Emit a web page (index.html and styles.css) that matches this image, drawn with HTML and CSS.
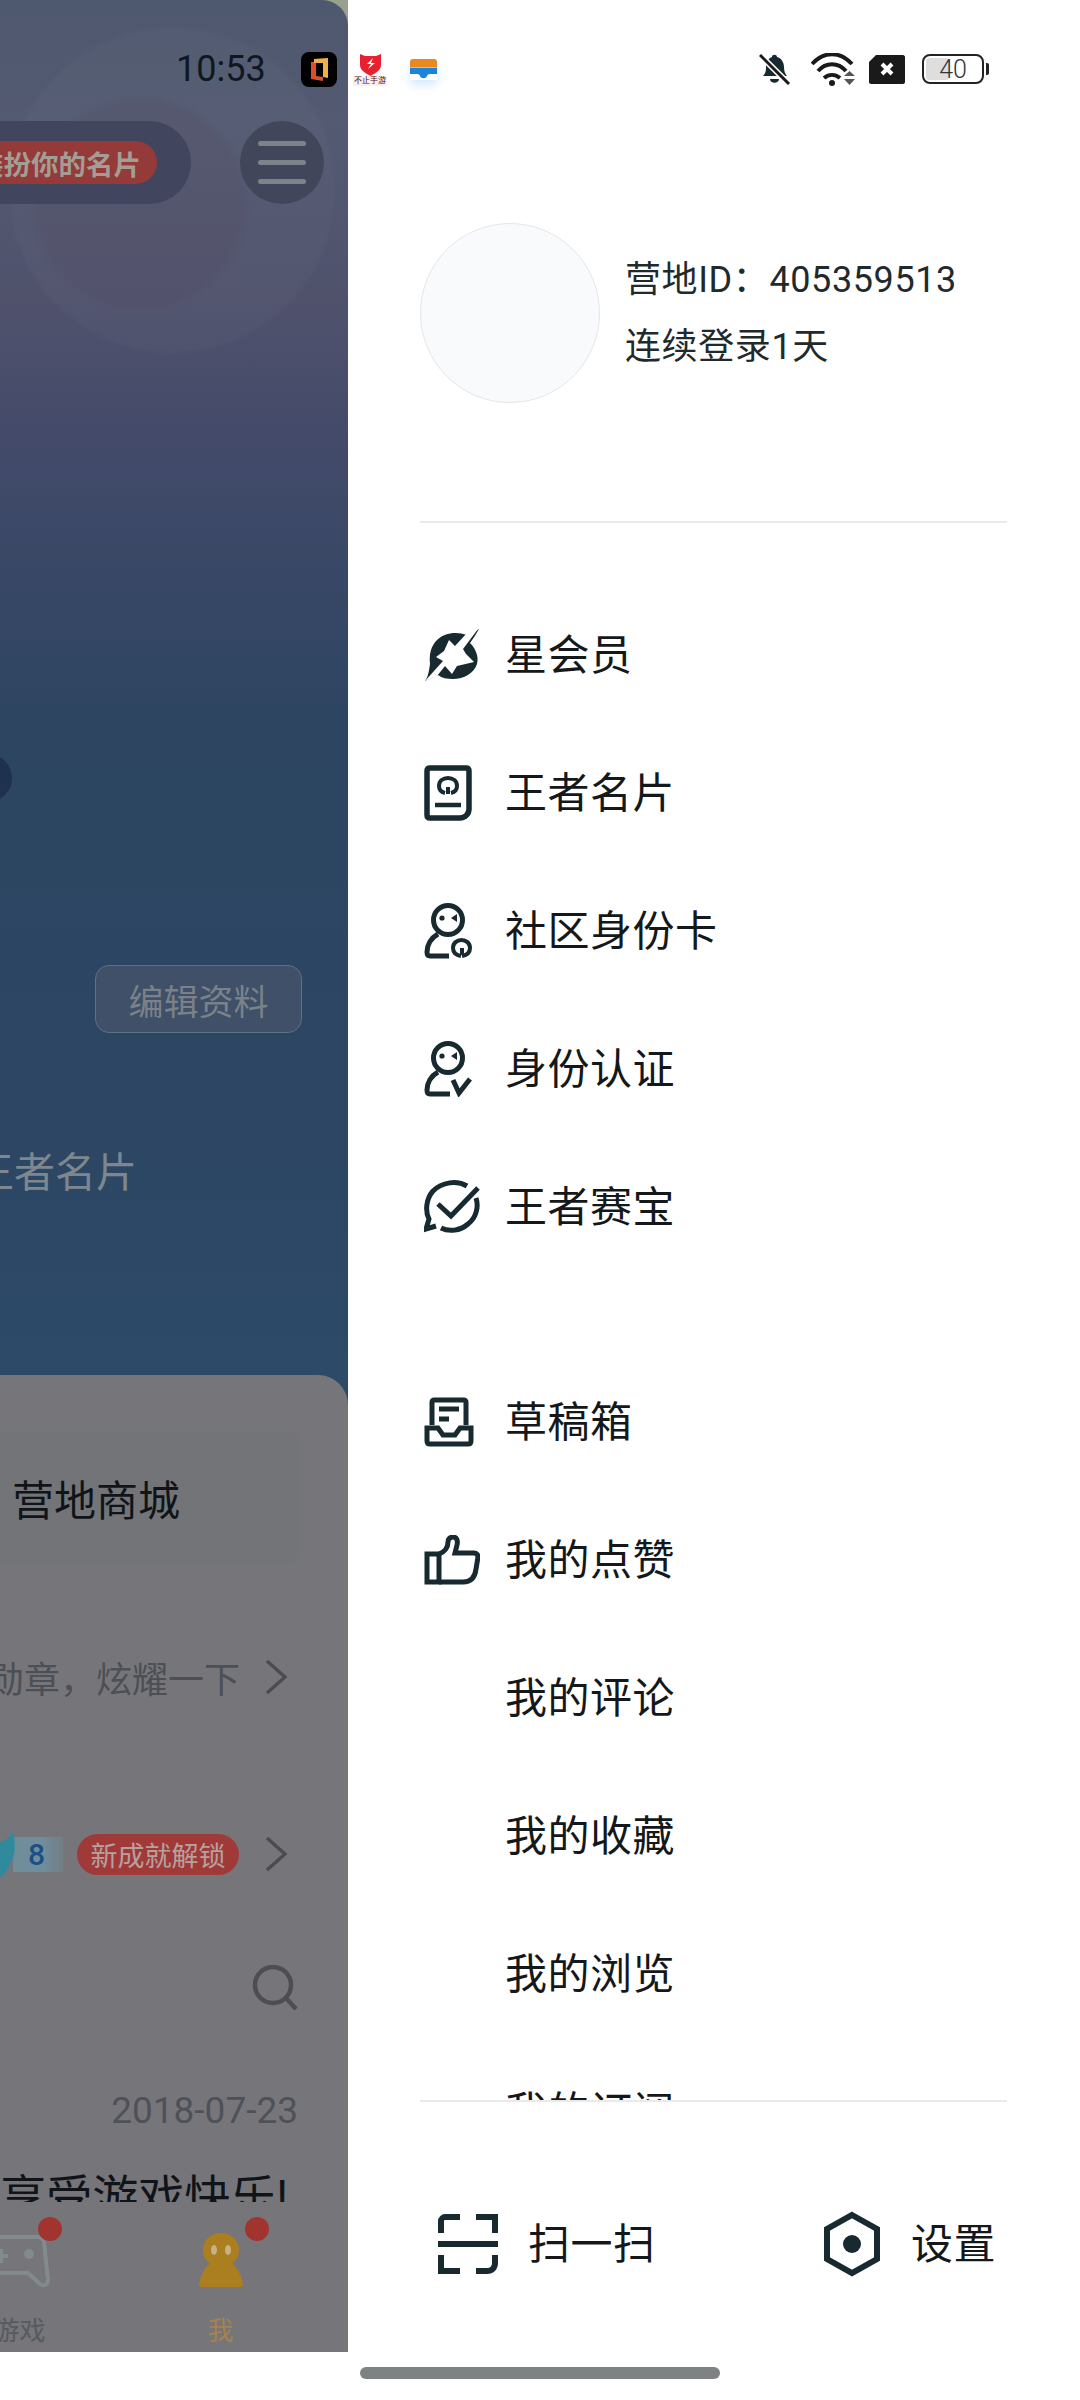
FILE: index.html
```html
<!DOCTYPE html>
<html lang="zh-CN">
<head>
<meta charset="utf-8">
<title>营地</title>
<link rel="stylesheet" href="styles.css">
</head>
<body>
<div class="page">
  <section class="left">
    <div class="hero">
      <div class="topbar">
        <div class="pill"><span class="pill-badge">装扮你的名片</span></div>
        <div class="burger"><i></i><i></i><i></i></div>
      </div>
      <div class="dark-dot"></div>
      <div class="edit-btn">编辑资料</div>
      <div class="hero-title">王者名片</div>
    </div>
    <div class="sheet">
      <div class="feed">
        <div class="shop-card">营地商城</div>
        <div class="info-row">
          <span class="info-text">佩戴勋章，炫耀一下</span>
          <svg class="chev" viewBox="0 0 22 36"><path d="M2 2l18 16L2 34"/></svg>
        </div>
        <div class="info-row info-row-2">
          <svg class="flame" viewBox="0 0 16 47"><path d="M14 0c2 10 3 20-1 29-3 8-7 14-13 18V12C6 10 11 6 14 0z" fill="#2f8a9e"/></svg>
          <span class="ribbon">8</span>
          <span class="ach">新成就解锁</span>
          <svg class="chev" viewBox="0 0 22 36"><path d="M2 2l18 16L2 34"/></svg>
        </div>
        <div class="search-row">
          <svg class="search" viewBox="0 0 46 46"><circle cx="21" cy="20" r="18"/><path d="M34 33l10 11"/></svg>
        </div>
        <div class="date">2018-07-23</div>
        <div class="post-title">享受游戏快乐!</div>
      </div>
      <nav class="tabbar">
        <div class="tab">
          <svg class="tab-icon game" viewBox="0 0 60 56"><path d="M0 5h48c3 0 5 2 6 5l4 38c0 5-5 7-9 3L38 41H0" /><circle cx="39" cy="22" r="5" class="game-dot"/><path d="M4 24h14M11 17v14"/></svg>
          <span class="tab-label">游戏</span>
          <i class="tab-dot dot-a"></i>
        </div>
        <div class="tab tab-on">
          <svg class="tab-icon" viewBox="0 0 44 56"><path d="M22 1c11 0 18 8 18 17 0 6-3 11-7 14 5 3 9 10 11 20 0 2-1 3-3 3H3c-2 0-3-1-3-3 2-10 6-17 11-20-4-3-7-8-7-14C4 9 11 1 22 1z" fill="#ab7f1f"/><ellipse cx="15" cy="18" rx="3" ry="5" fill="#c9b184"/><ellipse cx="29" cy="18" rx="3" ry="5" fill="#c9b184"/></svg>
          <span class="tab-label">我</span>
          <i class="tab-dot dot-b"></i>
        </div>
      </nav>
    </div>
  </section>

  <aside class="drawer">
    <div class="profile">
      <div class="avatar"></div>
      <div class="profile-text">
        <div class="profile-line">营地ID：405359513</div>
        <div class="profile-line">连续登录1天</div>
      </div>
    </div>
    <div class="rule"></div>
    <div class="menu">
      <div class="group">
        <div class="item">
          <span class="ico"><svg width="56" height="52" viewBox="0 0 56 52"><path class="solid" d="M55 0c-3 5-6 10-9 14 6 6 9 14 7 21-3 9-13 15-24 15-6 0-11-1-15-4-4 2-9 4-13 6 3-4 4-10 5-17C5 25 7 17 13 11 20 4 32 2 43 6c4-2 8-4 12-6z"/><path fill="#fff" d="M25 11l6 6L43 4l11-4-15 20 3 5 8 8-17 4-5 8-7-8-8 10-12 5 18-20-7-4 8-6z"/></svg></span>
          <span class="label">星会员</span>
        </div>
        <div class="item">
          <span class="ico"><svg width="48" height="56" viewBox="0 0 48 56"><path class="line" d="M6 3h36c2 0 3 1 3 3v38c0 5-4 9-9 9H6c-2 0-3-1-3-3V6c0-2 1-3 3-3z" stroke-width="5.500"/><path class="line" d="M21 28c-4-1-6-4-6-7 0-5 4-8 9-8s9 3 9 8c0 3-2 6-6 7" stroke-width="4"/><path class="line" d="M24 22v7" stroke-width="4"/><path class="line" d="M11 40h26" stroke-width="4.500"/></svg></span>
          <span class="label">王者名片</span>
        </div>
        <div class="item">
          <span class="ico"><svg width="48" height="56" viewBox="0 0 48 56"><circle class="line" cx="24" cy="17" r="14.500" stroke-width="5"/><circle class="solid" cx="18" cy="15" r="2.600"/><path class="solid" d="M33 11v8l-6-4z"/><path class="line" d="M14 31C7 35 3 42 3 49c0 3 1 4 3 4h19" stroke-width="5"/><path class="line" d="M37 53c-5-1-8-4-8-8 0-5 4-8 8.500-8S46 40 46 45c0 4-3 7-8 8" stroke-width="4"/><path class="line" d="M38 45v7" stroke-width="4"/></svg></span>
          <span class="label">社区身份卡</span>
        </div>
        <div class="item">
          <span class="ico"><svg width="48" height="56" viewBox="0 0 48 56"><circle class="line" cx="24" cy="17" r="14.500" stroke-width="5"/><circle class="solid" cx="18" cy="15" r="2.600"/><path class="solid" d="M33 11v8l-6-4z"/><path class="line" d="M14 31C7 35 3 42 3 49c0 3 1 4 3 4h20" stroke-width="5"/><path class="line" d="M29 39l6 13 11-14" stroke-width="5"/></svg></span>
          <span class="label">身份认证</span>
        </div>
        <div class="item">
          <span class="ico"><svg width="56" height="54" viewBox="0 0 56 54"><path class="line" d="M43 6C33 0 18 2 9 11 2 19 1 31 5 39l-3 10 10-3" stroke-width="5"/><path class="line" d="M52 18c3 9 0 20-8 26-8 7-19 8-27 4" stroke-width="5"/><path class="line" d="M14 24l13 12L54 8" stroke-width="5"/></svg></span>
          <span class="label">王者赛宝</span>
        </div>
      </div>
      <div class="group group-2">
        <div class="item">
          <span class="ico"><svg width="50" height="50" viewBox="0 0 50 50"><path class="line" d="M8 28V5c0-1 1-2 2-2h30c1 0 2 1 2 2v23" stroke-width="5"/><path class="line" d="M15 12h20M15 22h10" stroke-width="5"/><path class="line" d="M3 31h11l5 7h12l5-7h11v13c0 2-1 3-3 3H6c-2 0-3-1-3-3z" stroke-width="5"/></svg></span>
          <span class="label">草稿箱</span>
        </div>
        <div class="item">
          <span class="ico"><svg width="56" height="50" viewBox="0 0 56 50"><path class="line" d="M3 19h12v28H3z" stroke-width="5"/><path class="line" d="M15 19c6-2 9-7 9-12 0-3 2-5 5-5 4 0 5 4 4 8l-2 8h19c3 0 4 2 4 4l-2 12c-1 9-6 13-13 13H15" stroke-width="5"/></svg></span>
          <span class="label">我的点赞</span>
        </div>
        <div class="item"><span class="ico"></span><span class="label">我的评论</span></div>
        <div class="item"><span class="ico"></span><span class="label">我的收藏</span></div>
        <div class="item"><span class="ico"></span><span class="label">我的浏览</span></div>
        <div class="item"><span class="ico"></span><span class="label">我的订阅</span></div>
      </div>
    </div>
    <div class="rule"></div>
    <div class="foot">
      <div class="foot-item">
        <svg width="60" height="60" viewBox="0 0 60 60"><path class="line" d="M22 3H7C5 3 3 5 3 7v12M38 3h19v16M22 57H3V41M38 57h11c5 0 8-3 8-8v-8" stroke-width="6"/><path class="line" d="M0 30h60" stroke-width="6"/></svg>
        <span class="label">扫一扫</span>
      </div>
      <div class="foot-item">
        <svg width="58" height="66" viewBox="0 0 58 66"><path class="line" d="M29 4l25 14v30L29 62 4 48V18z" stroke-width="6"/><circle class="solid" cx="29" cy="33" r="9"/></svg>
        <span class="label">设置</span>
      </div>
    </div>
  </aside>

  <header class="status">
    <span class="time">10:53</span>
    <span class="app app-black"><svg width="17" height="23" viewBox="0 0 17 23"><path d="M0 4h5v14l7 1v4L0 21z" fill="#dd4f2a"/><path d="M3 1l14-1v20l-5-1V5H3z" fill="#efb04a"/></svg></span>
    <span class="app app-red">
      <svg width="23" height="22" viewBox="0 0 23 22"><path d="M1 0l5 2h11l5-2v11c0 5-5 8-10.500 11C6 19 1 16 1 11z" fill="#e8202f"/><path d="M14 4l-6 6h4l-3 5 7-6h-4z" fill="#fff"/></svg>
      <span class="app-cap">不止手游</span>
    </span>
    <span class="app app-wallet"><svg width="27" height="21" viewBox="0 0 27 21"><path d="M0 3c0-2 1-3 3-3h21c2 0 3 1 3 3v5H0z" fill="#e8891f"/><path d="M0 8h27v1H0z" fill="#e8c23a"/><path d="M0 9h27v6H20c-2 0-3 1-3 2-1 3-6 3-7 0 0-1-1-2-3-2H0z" fill="#1b85d8"/></svg></span>
    <span class="sys">
      <svg width="32" height="32" viewBox="0 0 32 32"><path class="solid" d="M4 23c3-3 3-6 3-10 0-5 3-8 6-9 0-3 5-3 5 0 4 1 7 5 7 10 0 4 1 7 3 9z"/><path class="solid" d="M11 26h9c0 5-9 5-9 0z"/><path d="M1 2l29 29" stroke="#fff" stroke-width="6"/><path d="M1 2l29 29" stroke="#1a1a1a" stroke-width="3"/></svg>
      <svg class="wifi" width="44" height="33" viewBox="0 0 44 33"><path d="M1 11c12-13 28-13 40 0M7 18c8-9 20-9 28 0M13 25c5-4 11-4 16 0" fill="none" stroke="#1a1a1a" stroke-width="4"/><circle cx="21" cy="30" r="3" fill="#1a1a1a"/><path d="M33 23h11l-5.500-5zM33 26h11l-5.500 6z" fill="#555"/></svg>
      <svg class="sim" width="36" height="29" viewBox="0 0 36 29"><path d="M7 0h27c1 0 2 1 2 2v25c0 1-1 2-2 2H2c-1 0-2-1-2-2V7z" fill="#1a1a1a"/><path d="M13 9l10 10M23 9L13 19" stroke="#fff" stroke-width="4"/></svg>
      <span class="battery"><span class="batt-body"><i class="batt-fill"></i><span class="batt-num">40</span></span><i class="batt-nub"></i></span>
    </span>
  </header>
  <div class="home"></div>
</div>
</body>
</html>
```
FILE: styles.css
```css
* { box-sizing: border-box; }
html, body { margin: 0; padding: 0; background: #fff; }
body { font-family: Roboto, "Noto Sans CJK SC", sans-serif; }
.page { position: relative; display: flex; width: 1080px; height: 2400px; overflow: hidden; background: #fff; }

/* dimmed page behind the drawer */
.left { width: 348px; height: 2352px; flex: none; display: flex; flex-direction: column; overflow: hidden; background: #98a08f; }
.hero {
  height: 1405px; flex: none; display: flex; flex-direction: column; align-items: flex-end;
  padding: 121px 24px 0 0; border-top-right-radius: 26px;
  background:
    radial-gradient(circle 112px at 140px 205px, rgba(78,62,84,.14) 90%, transparent 100%),
    radial-gradient(circle 165px at 172px 190px, rgba(130,135,150,.07) 97%, transparent 100%),
    linear-gradient(#4e586e 0, #535a72 120px, #50526c 300px, #434a6a 440px, #2d4561 720px, #2c4663 1100px, #2d4a69 1405px);
}
.topbar { display: flex; gap: 49px; height: 83px; flex: none; }
.pill { height: 83px; flex: none; display: flex; align-items: center; padding: 0 34px 0 30px; border-radius: 0 42px 42px 0; background: #41465e; }
.pill-badge { height: 43px; padding: 0 16px 0 16px; display: flex; align-items: center; border-radius: 22px; background: #943a38; color: #a39d95; font-size: 27.500px; font-weight: 700; white-space: nowrap; }
.burger { width: 84px; height: 83px; border-radius: 50%; background: #42465a; display: flex; flex-direction: column; align-items: center; justify-content: center; gap: 14px; }
.burger i { display: block; width: 48px; height: 5px; border-radius: 3px; background: #7e828b; }
.dark-dot { align-self: flex-start; width: 48px; height: 48px; margin: 550px 0 0 -36px; border-radius: 50%; background: #1e3250; }
.edit-btn { width: 207px; height: 68px; margin: 163px 22px 0 0; display: flex; align-items: center; justify-content: center; border: 1px solid #5f7184; border-radius: 14px; background: #3f5068; color: #7b8188; font-size: 35px; white-space: nowrap; }
.hero-title { margin: 115px 187px 0 0; height: 50px; line-height: 50px; font-size: 41px; color: #7e8790; white-space: nowrap; }

.sheet { flex: 1; min-height: 0; margin-top: -30px; display: flex; flex-direction: column; border-top-right-radius: 30px; background: #76767a; }
.feed { flex: 1; min-height: 0; overflow: hidden; display: flex; flex-direction: column; align-items: flex-end; }
.shop-card { flex: none; align-self: flex-start; width: 300px; height: 133px; margin-top: 56px; padding: 0 0 0 12px; display: flex; align-items: center; border-radius: 0 10px 10px 0; background: #727477; color: #101418; font-size: 42px; white-space: nowrap; }
.info-row { display: flex; align-items: center; justify-content: flex-end; height: 50px; margin: 88px 61px 0 0; flex: none; }
.info-row-2 { margin-top: 127px; }
.info-text { font-size: 36px; color: #4c4f55; white-space: nowrap; margin-right: 25px; }
.chev { width: 22px; height: 36px; flex: none; fill: none; stroke: #4a4c52; stroke-width: 3.500px; }
.flame { width: 16px; height: 47px; flex: none; margin-right: -2px; position: relative; }
.ribbon { width: 50px; height: 35px; padding-left: 15px; display: flex; align-items: center; background: linear-gradient(90deg, #6f8d9a 60%, #737f85); color: #1c4f88; font-size: 30px; font-weight: 500; margin-right: 14px; }
.ach { height: 41px; width: 162px; margin-right: 26px; display: flex; align-items: center; justify-content: center; border-radius: 21px; background: #a03a38; color: #b8a09e; font-size: 27px; white-space: nowrap; }
.search-row { height: 46px; margin: 86px 50px 0 0; flex: none; }
.search { width: 46px; height: 46px; fill: none; stroke: #4c4e54; stroke-width: 4.500px; }
.date { height: 40px; line-height: 40px; margin: 80px 50px 0 0; font-size: 37px; color: #4f5159; flex: none; }
.post-title { margin: 43px 60px 0 0; height: 46px; line-height: 46px; font-size: 46px; color: #101418; white-space: nowrap; flex: none; }

.tabbar { height: 150px; flex: none; display: flex; justify-content: flex-end; padding-right: 27px; position: relative; background: #75757a; }
.tab { position: relative; width: 201px; flex: none; display: flex; flex-direction: column; align-items: center; padding-top: 30px; }
.tab-icon { width: 44px; height: 56px; flex: none; }
.game { width: 60px; fill: none; stroke: #828a8d; stroke-width: 4px; }
.game .game-dot { fill: #828a8d; stroke: none; }
.tab-label { margin-top: 28px; height: 30px; line-height: 30px; font-size: 26px; color: #565a5f; }
.tab-on .tab-label { color: #a5824f; }
.tab-dot { position: absolute; top: 15px; width: 24px; height: 24px; border-radius: 50%; background: #a23430; }
.dot-a { left: 119px; }
.dot-b { left: 125px; }

/* drawer */
.drawer { flex: 1; min-width: 0; height: 2400px; display: flex; flex-direction: column; padding: 223px 73px 14px 72px; background: #fff; }
.profile { display: flex; align-items: center; gap: 25px; height: 180px; flex: none; margin-bottom: 118px; }
.avatar { width: 180px; height: 180px; flex: none; border-radius: 50%; border: 1.500px solid #e4e6ea; background: #f9fafc; }
.profile-text { display: flex; flex-direction: column; gap: 17px; }
.profile-line { height: 50px; line-height: 50px; font-size: 36px; letter-spacing: .6px; color: #1f2a2d; white-space: nowrap; }
.rule { height: 2px; flex: none; background: #e9ebeb; }
.menu { flex: 1; min-height: 0; overflow: hidden; padding-top: 63px; }
.group-2 { margin-top: 77px; }
.item { height: 138px; display: flex; align-items: center; }
.ico { width: 85px; height: 60px; flex: none; display: flex; align-items: center; padding-left: 4px; }
.label { padding-top: 2px; font-size: 42px; letter-spacing: .5px; line-height: 56px; color: #14181a; white-space: nowrap; }
.line { fill: none; stroke: #172a30; }
.solid { fill: #172a30; }
.foot { height: 284px; flex: none; display: flex; align-items: center; justify-content: space-between; padding: 0 11px 0 18px; }
.foot-item { display: flex; align-items: center; gap: 30px; }

/* status bar, over both panes */
.status { position: absolute; top: 0; left: 0; right: 0; height: 138px; padding: 0 91px 0 176px; display: flex; align-items: center; }
.time { width: 88px; margin-right: 37px; font-size: 36px; color: #0f1720; white-space: nowrap; }
.app { flex: none; display: flex; align-items: center; justify-content: center; }
.app-black { width: 36px; height: 35px; margin-right: 16px; border-radius: 8px; background: #000; }
.app-red { position: relative; width: 34px; height: 30px; margin-right: 23px; align-items: flex-start; }
.app-cap { position: absolute; left: 0; right: 0; bottom: -2px; text-align: center; font-size: 8px; line-height: 10px; color: #4a1010; background: #fbeeee; white-space: nowrap; }
.app-wallet { width: 27px; height: 21px; box-shadow: 0 5px 9px rgba(60,160,240,.22); }
.sys { margin-left: auto; display: flex; align-items: center; gap: 20px; }
.wifi { margin-right: -6px; }
.sim { margin-right: -3px; }
.battery { display: flex; align-items: center; }
.batt-body { position: relative; width: 62px; height: 30px; display: flex; align-items: center; justify-content: center; border: 2.500px solid #222; border-radius: 8px; overflow: hidden; }
.batt-fill { position: absolute; left: 2px; top: 2px; bottom: 2px; width: 40%; border-radius: 3px; background: #dedede; }
.batt-num { position: relative; font-size: 25px; font-weight: 300; color: #333; line-height: 1; }
.batt-nub { display: block; width: 3px; height: 12px; margin-left: 2px; border-radius: 0 2px 2px 0; background: #222; }

.home { position: absolute; left: 360px; bottom: 21px; width: 360px; height: 12px; border-radius: 6px; background: #7f8282; }
```
